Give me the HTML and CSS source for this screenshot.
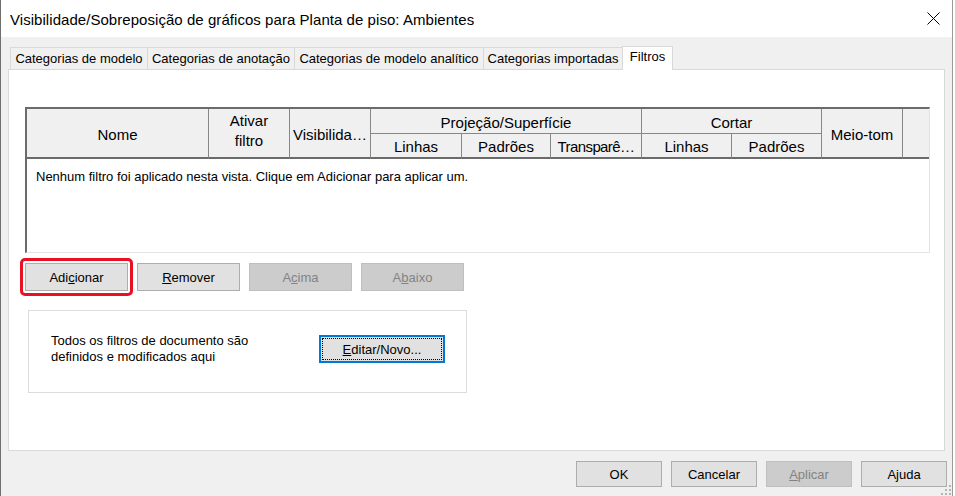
FILE: index.html
```html
<!DOCTYPE html>
<html lang="pt">
<head>
<meta charset="utf-8">
<title>Visibilidade/Sobreposição de gráficos</title>
<link rel="stylesheet" href="styles.css">
</head>
<body>
<div class="window">
  <div class="titlebar">
    <span class="title">Visibilidade/Sobreposição de gráficos para Planta de piso: Ambientes</span>
    <svg class="close" width="13" height="13" viewBox="0 0 13 13"><path d="M0.5 0.5 L12.5 12.5 M12.5 0.5 L0.5 12.5" stroke="#000" stroke-width="1" fill="none"/></svg>
  </div>
  <div class="main">
    <div class="tabs">
      <div class="tab tab-model">Categorias de modelo</div>
      <div class="tab tab-annot">Categorias de anotação</div>
      <div class="tab tab-analytic">Categorias de modelo analítico</div>
      <div class="tab tab-imported">Categorias importadas</div>
      <div class="tab tab-filters active">Filtros</div>
    </div>
    <div class="panel">
      <div class="grid">
        <div class="head">
          <div class="hc tall col-name">Nome</div>
          <div class="hc tall col-on two-line">Ativar<br>filtro</div>
          <div class="hc tall col-vis">Visibilida…</div>
          <div class="hc col-proj">Projeção/Superfície</div>
          <div class="hc col-cut">Cortar</div>
          <div class="hc tall col-half">Meio-tom</div>
          <div class="hc tall col-fill"></div>
          <div class="hc sub sub-1">Linhas</div>
          <div class="hc sub sub-2">Padrões</div>
          <div class="hc sub sub-3 tight">Transparê…</div>
          <div class="hc sub sub-4">Linhas</div>
          <div class="hc sub sub-5">Padrões</div>
        </div>
        <div class="rows">Nenhum filtro foi aplicado nesta vista. Clique em Adicionar para aplicar um.</div>
      </div>
      <div class="actions">
        <span class="focus-ring"><button class="btn">Adi<u>c</u>ionar</button></span>
        <button class="btn"><u>R</u>emover</button>
        <button class="btn disabled">A<u>c</u>ima</button>
        <button class="btn disabled">A<u>b</u>aixo</button>
      </div>
      <div class="groupbox">
        <div class="group-text">Todos os filtros de documento são<br>definidos e modificados aqui</div>
        <button class="btn btn-edit"><span class="focus-rect"><u>E</u>ditar/Novo...</span></button>
      </div>
    </div>
  </div>
  <div class="footer">
    <button class="btn btn-foot">OK</button>
    <button class="btn btn-foot">Cancelar</button>
    <button class="btn btn-foot disabled"><u>A</u>plicar</button>
    <button class="btn btn-foot">Ajuda</button>
  </div>
  <svg class="grip" width="12" height="12" viewBox="0 0 12 12">
    <rect x="9" y="1" width="2" height="2" fill="#b4b4b4"/>
    <rect x="5" y="5" width="2" height="2" fill="#b4b4b4"/>
    <rect x="9" y="5" width="2" height="2" fill="#b4b4b4"/>
    <rect x="1" y="9" width="2" height="2" fill="#b4b4b4"/>
    <rect x="5" y="9" width="2" height="2" fill="#b4b4b4"/>
    <rect x="9" y="9" width="2" height="2" fill="#b4b4b4"/>
  </svg>
</div>
</body>
</html>
```

FILE: styles.css
```css
* {
  box-sizing: border-box;
}

html,
body {
  margin: 0;
  padding: 0;
}

body {
  background: #ffffff;
  font-family: "Liberation Sans", Arial, sans-serif;
  font-size: 13px;
  color: #000000;
}

.window {
  position: relative;
  width: 953px;
  height: 496px;
  background: #f0f0f0;
  border-left: 1px solid #6e6e6e;
  border-right: 1px solid #9b9b9b;
  overflow: hidden;
}

/* title bar */
.titlebar {
  height: 37px;
  background: #ffffff;
  display: flex;
  align-items: center;
  padding-left: 9px;
}

.title {
  font-size: 15px;
  padding-top: 2px;
  white-space: nowrap;
  letter-spacing: 0.05px;
}

.close {
  display: block;
  margin-left: auto;
  margin-right: 12px;
}

/* main area */
.main {
  padding: 9px 7px 0 7px;
}

.tabs {
  display: flex;
  align-items: flex-end;
  height: 23px;
  padding-left: 2px;
}

.tab {
  height: 22px;
  line-height: 21px;
  border: 1px solid #d9d9d9;
  border-bottom: none;
  background: #f0f0f0;
  text-align: center;
  white-space: nowrap;
  margin-left: -1px;
}

.tab:first-child {
  margin-left: 0;
}

.tab-model { width: 138px; }
.tab-annot { width: 148px; }
.tab-analytic { width: 190px; }
.tab-imported { width: 140px; }
.tab-filters { width: 51px; }

.tab.active {
  height: 24px;
  line-height: 20px;
  margin-bottom: -1px;
  background: #ffffff;
  position: relative;
  z-index: 1;
}

.panel {
  height: 382px;
  background: #ffffff;
  border: 1px solid #d9d9d9;
  padding: 37px 14px 0 16px;
}

/* filter grid */
.grid {
  width: 905px;
  border-left: 2px solid #6b6b6b;
  border-top: 2px solid #6b6b6b;
  border-right: 1px solid #e3e3e3;
  border-bottom: 1px solid #e3e3e3;
}

.head {
  display: grid;
  grid-template-columns: 182px 81px 81px 91px 89px 91px 90px 90px 81px 26px;
  grid-template-rows: 25px 25px;
  background: #f0f0f0;
  font-size: 15px;
}

.hc {
  display: flex;
  align-items: center;
  justify-content: center;
  text-align: center;
  white-space: nowrap;
  line-height: 18px;
  padding-top: 3px;
  border-right: 1px solid #878787;
  border-bottom: 1px solid #878787;
}

.hc.tight {
  letter-spacing: -0.6px;
}

.tall {
  grid-row: 1 / 3;
  border-bottom: 2px solid #6b6b6b;
}

.two-line {
  line-height: 20px;
  padding-top: 0;
  padding-bottom: 4px;
}

.sub {
  grid-row: 2;
  border-bottom: 2px solid #6b6b6b;
}

.col-name { grid-column: 1; }
.col-on { grid-column: 2; }
.col-vis { grid-column: 3; }
.col-proj { grid-column: 4 / 7; grid-row: 1; }
.col-cut { grid-column: 7 / 9; grid-row: 1; }
.col-half { grid-column: 9; }
.col-fill { grid-column: 10; border-right: none; }
.sub-1 { grid-column: 4; }
.sub-2 { grid-column: 5; }
.sub-3 { grid-column: 6; }
.sub-4 { grid-column: 7; }
.sub-5 { grid-column: 8; }

.rows {
  height: 93px;
  background: #ffffff;
  padding: 10px 0 0 9px;
  line-height: 16px;
  white-space: nowrap;
}

/* buttons */
.btn {
  display: flex;
  align-items: center;
  justify-content: center;
  width: 103px;
  height: 28px;
  padding: 0;
  margin: 0;
  background: #e1e1e1;
  border: 1px solid #adadad;
  border-radius: 0;
  font-family: "Liberation Sans", Arial, sans-serif;
  font-size: 13px;
  color: #000000;
  white-space: nowrap;
}

.btn u {
  text-underline-offset: 1px;
}

.btn.disabled {
  background: #cccccc;
  border-color: #bfbfbf;
  color: #838383;
}

.actions {
  display: flex;
  gap: 9px;
  margin-top: 10px;
}

.focus-ring {
  display: flex;
  margin: -5px;
  padding: 2px;
  border: 3px solid #e81123;
  border-radius: 5px;
}

.groupbox {
  display: flex;
  align-items: center;
  width: 439px;
  height: 83px;
  margin: 19px 0 0 3px;
  border: 1px solid #dcdcdc;
  padding: 0 21px 5px 22px;
}

.group-text {
  line-height: 16px;
  white-space: nowrap;
}

.btn-edit {
  width: 126px;
  margin-left: auto;
  border: 1px solid #0078d7;
  box-shadow: inset 0 0 0 1px #0078d7;
  padding: 2px;
}

.focus-rect {
  display: flex;
  align-items: center;
  justify-content: center;
  width: 100%;
  height: 100%;
  border: 1px dotted #000000;
}

.footer {
  display: flex;
  justify-content: flex-end;
  gap: 9px;
  margin-top: 10px;
  padding-right: 5px;
}

.btn-foot {
  width: 86px;
  height: 26px;
}

.grip {
  position: absolute;
  right: 0;
  bottom: 0;
  display: block;
}
```
